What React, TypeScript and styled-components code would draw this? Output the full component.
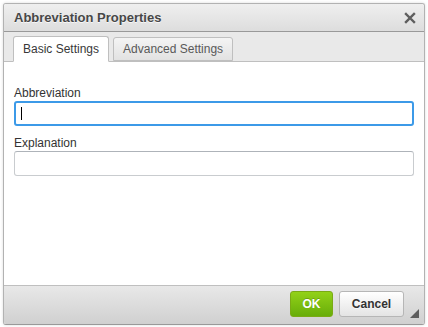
import React from 'react';
import styled, { createGlobalStyle } from 'styled-components';

const GlobalStyle = createGlobalStyle`
  html, body {
    margin: 0;
    padding: 0;
    background: #ffffff;
  }
  body {
    font-family: "Liberation Sans", Arial, sans-serif;
    font-size: 12px;
    color: #333333;
  }
`;

const fields = [
  { id: 'abbr', label: 'Abbreviation', focused: true },
  { id: 'title', label: 'Explanation', focused: false },
];

const App: React.FC = () => {
  return (
    <>
      <GlobalStyle />
      <Page>
        <Dialog>
          <TitleBar>
            <Title>Abbreviation Properties</Title>
            <CloseButton aria-label="Close">
              <svg width="12" height="12" viewBox="0 0 12 12">
                <path d="M2 2 L10 10 M10 2 L2 10" stroke="#5e5e5e" strokeWidth="2.4" strokeLinecap="square" />
              </svg>
            </CloseButton>
          </TitleBar>

          <Tabs>
            <Tab $active>Basic Settings</Tab>
            <Tab>Advanced Settings</Tab>
          </Tabs>

          <Contents>
            {fields.map((f) => (
              <Field key={f.id}>
                <Label htmlFor={f.id}>{f.label}</Label>
                <InputWrap>
                  <Input id={f.id} $focused={f.focused} readOnly />
                  {f.focused && <Caret />}
                </InputWrap>
              </Field>
            ))}
          </Contents>

          <Footer>
            <OkButton>OK</OkButton>
            <CancelButton>Cancel</CancelButton>
            <Grip />
          </Footer>
        </Dialog>
      </Page>
    </>
  );
};

export default App;

const Page = styled.div`
  padding: 3px;
  width: 428px;
  height: 327px;
  box-sizing: border-box;
`;

const Dialog = styled.div`
  position: relative;
  display: flex;
  flex-direction: column;
  width: 422px;
  height: 322px;
  box-sizing: border-box;
  border: 1px solid #b2b2b2;
  border-bottom-color: #999999;
  border-radius: 3px;
  box-shadow: 0 0 3px rgba(0, 0, 0, 0.15);
  overflow: hidden;
  background: #ffffff;
`;

const TitleBar = styled.div`
  display: flex;
  align-items: center;
  justify-content: space-between;
  height: 28px;
  box-sizing: border-box;
  padding: 0 6px 0 10px;
  border-bottom: 1px solid #999999;
  background: linear-gradient(to bottom, #efefef, #dddddd);
`;

const Title = styled.div`
  font-weight: bold;
  font-size: 13px;
  color: #474747;
  text-shadow: 0 1px 0 rgba(255, 255, 255, 0.75);
`;

const CloseButton = styled.div`
  display: flex;
  align-items: center;
  justify-content: center;
  width: 16px;
  height: 16px;
  margin-top: 1px;
`;

const Tabs = styled.div`
  display: flex;
  align-items: flex-end;
  gap: 4px;
  height: 30px;
  box-sizing: border-box;
  padding: 5px 0 0 9px;
  background: #e9e9e9;
  border-bottom: 1px solid #bfbfbf;
`;

const Tab = styled.div<{ $active?: boolean }>`
  display: flex;
  align-items: center;
  height: ${({ $active }) => ($active ? '26px' : '24px')};
  margin-bottom: ${({ $active }) => ($active ? '-1px' : '0')};
  box-sizing: border-box;
  padding: 0 9px;
  border: 1px solid #bfbfbf;
  border-bottom-color: ${({ $active }) => ($active ? '#ffffff' : '#bfbfbf')};
  border-radius: 3px 3px 0 0;
  background: ${({ $active }) => ($active ? '#ffffff' : 'linear-gradient(to bottom, #f4f4f4, #e2e2e2)')};
  color: ${({ $active }) => ($active ? '#383838' : '#595959')};
  font-size: 12px;
  padding-bottom: ${({ $active }) => ($active ? '1px' : '0')};
`;

const Contents = styled.div`
  flex: 1;
  display: flex;
  flex-direction: column;
  gap: 10px;
  padding: 24px 10px 0 10px;
  background: #ffffff;
`;

const Field = styled.div`
  display: flex;
  flex-direction: column;
`;

const Label = styled.label`
  display: block;
  height: 15px;
  line-height: 15px;
  font-size: 12px;
  color: #333333;
`;

const InputWrap = styled.div`
  position: relative;
`;

const Input = styled.input<{ $focused?: boolean }>`
  display: block;
  width: 400px;
  height: 25px;
  box-sizing: border-box;
  margin: 0;
  padding: 4px 6px;
  border-radius: 3px;
  outline: none;
  background: #ffffff;
  font-family: inherit;
  font-size: 12px;
  caret-color: transparent;
  border: ${({ $focused }) => ($focused ? '2px solid #3c9ae8' : '1px solid #c9cccf')};
  border-top-color: ${({ $focused }) => ($focused ? '#3c9ae8' : '#aeb3b9')};
`;

const Caret = styled.span`
  position: absolute;
  left: 7px;
  top: 6px;
  width: 1px;
  height: 13px;
  background: #000000;
`;

const Footer = styled.div`
  position: relative;
  display: flex;
  justify-content: flex-end;
  align-items: flex-start;
  gap: 6px;
  height: 39px;
  box-sizing: border-box;
  padding: 5px 20px 0 0;
  border-top: 1px solid #bfbfbf;
  background: linear-gradient(to bottom, #e8e8e8, #d0d0d0);
`;

const ButtonBase = styled.div`
  display: flex;
  align-items: center;
  justify-content: center;
  height: 26px;
  box-sizing: border-box;
  border-radius: 3px;
  font-weight: bold;
  font-size: 12px;
`;

const OkButton = styled(ButtonBase)`
  width: 43px;
  color: #ffffff;
  border: 1px solid #7aaa15;
  background: linear-gradient(to bottom, #92d118, #68ad0a);
  text-shadow: 0 -1px 0 rgba(0, 0, 0, 0.2);
`;

const CancelButton = styled(ButtonBase)`
  width: 65px;
  color: #333333;
  border: 1px solid #b6b6b6;
  background: linear-gradient(to bottom, #ffffff, #e4e4e4);
  text-shadow: 0 1px 0 rgba(255, 255, 255, 0.5);
`;

const Grip = styled.div`
  position: absolute;
  right: 5px;
  bottom: 6px;
  width: 0;
  height: 0;
  border-style: solid;
  border-width: 0 0 9px 9px;
  border-color: transparent transparent #5e5e5e transparent;
`;
